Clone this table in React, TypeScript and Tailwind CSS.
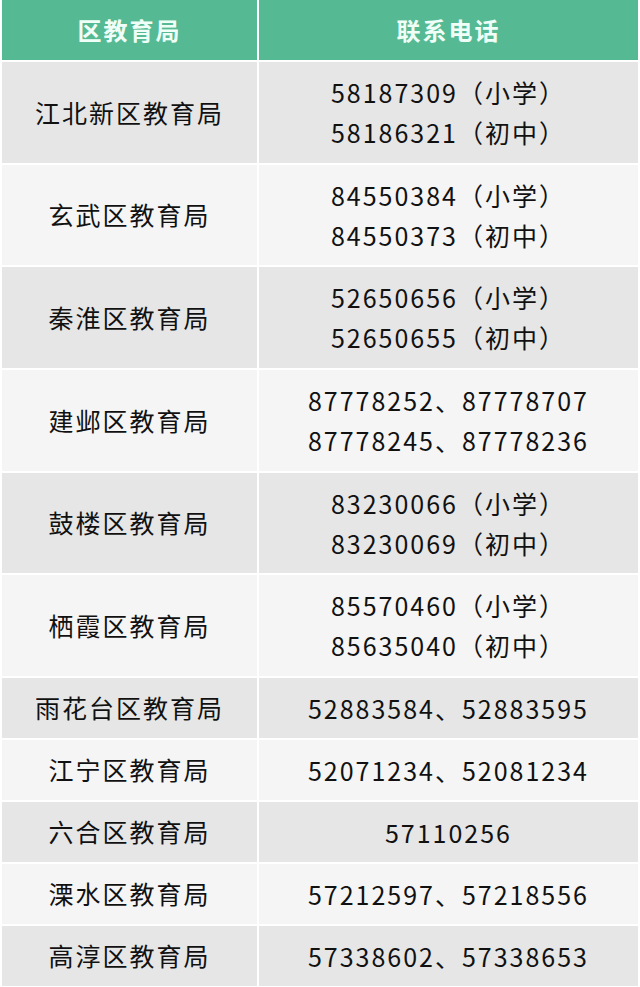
import React from "react";

type Row = { name: string; phones: string[]; tall: boolean };

const rows: Row[] = [
  { name: "江北新区教育局", phones: ["58187309（小学）", "58186321（初中）"], tall: true },
  { name: "玄武区教育局", phones: ["84550384（小学）", "84550373（初中）"], tall: true },
  { name: "秦淮区教育局", phones: ["52650656（小学）", "52650655（初中）"], tall: true },
  { name: "建邺区教育局", phones: ["87778252、87778707", "87778245、87778236"], tall: true },
  { name: "鼓楼区教育局", phones: ["83230066（小学）", "83230069（初中）"], tall: true },
  { name: "栖霞区教育局", phones: ["85570460（小学）", "85635040（初中）"], tall: true },
  { name: "雨花台区教育局", phones: ["52883584、52883595"], tall: false },
  { name: "江宁区教育局", phones: ["52071234、52081234"], tall: false },
  { name: "六合区教育局", phones: ["57110256"], tall: false },
  { name: "溧水区教育局", phones: ["57212597、57218556"], tall: false },
  { name: "高淳区教育局", phones: ["57338602、57338653"], tall: false },
];

export default function App() {
  return (
    <div
      className="w-[640px] h-[987px] bg-white pl-[2px] pr-[2px] flex flex-col gap-[2px]"
      style={{ fontFamily: '"Noto Sans CJK SC", "Noto Sans", sans-serif' }}
    >
      <div className="flex gap-[2px] h-[60px] shrink-0">
        <div className="w-[255px] bg-[#55b994] flex items-center justify-center text-[24px] font-bold tracking-[2px] text-[#effff7]">
          区教育局
        </div>
        <div className="flex-1 bg-[#55b994] flex items-center justify-center text-[24px] font-bold tracking-[2px] text-[#effff7]">
          联系电话
        </div>
      </div>
      {rows.map((r, i) => {
        const bg = i % 2 === 0 ? "bg-[#e6e6e6]" : "bg-[#f5f5f5]";
        return (
          <div
            key={r.name}
            className={`flex gap-[2px] shrink-0 ${r.tall ? "h-[100.7px]" : "h-[60px]"}`}
          >
            <div
              className={`w-[255px] ${bg} flex items-center justify-center text-[25px] tracking-[2px] text-[#111111]`}
            >
              {r.name}
            </div>
            <div
              className={`flex-1 ${bg} flex flex-col items-center justify-center pb-[1px] text-[25px] tracking-[2px] leading-[40px] text-[#111111]`}
            >
              {r.phones.map((p) => (
                <div key={p}>{p}</div>
              ))}
            </div>
          </div>
        );
      })}
    </div>
  );
}
